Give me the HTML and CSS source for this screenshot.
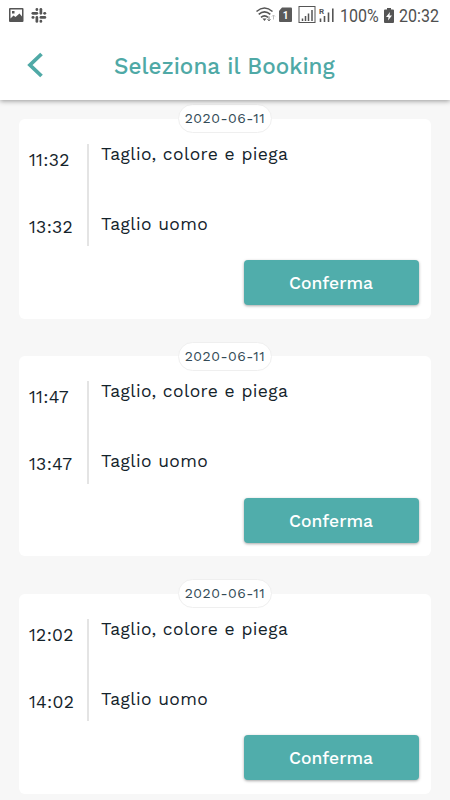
FILE: index.html
```html
<!DOCTYPE html>
<html lang="it">
<head>
<meta charset="utf-8">
<title>Seleziona il Booking</title>
<link rel="stylesheet" href="styles.css">
</head>
<body>
<div class="screen">
  <header class="header">
    <div class="status">
      <svg class="status-left" width="48" height="30" viewBox="0 0 48 30">
        <path fill="#555" fill-rule="evenodd" d="M10 8h12.500q1 0 1 1v12q0 1-1 1H10q-1 0-1-1V9q0-1 1-1zM10.500 9.500v9l3-3 2 1.500 4-3.500 2.500 3V9.500zM12 11h2.500v2.500H12z"/>
        <g transform="translate(31.500 8) scale(.67)" fill="#555">
          <rect y="6" width="10" height="4" rx="2"/><rect x="6" width="4" height="4.500" rx="2"/>
          <rect x="12" width="4" height="10" rx="2"/><rect x="17.500" y="6" width="4.500" height="4" rx="2"/>
          <rect x="12" y="12" width="10" height="4" rx="2"/><rect x="12" y="17.500" width="4" height="4.500" rx="2"/>
          <rect x="6" y="12" width="4" height="10" rx="2"/><rect y="12" width="4.500" height="4" rx="2"/>
        </g>
      </svg>
      <svg class="status-radio" width="82" height="30" viewBox="254 0 82 30">
        <g fill="none" stroke="#555" stroke-width="1.600">
          <path d="M256.500 11.500Q264.500 4.500 272.500 11.500M258.700 14.300Q264.500 9.300 270.300 14.300M261 17.300Q264.500 14.300 268 17.300"/>
        </g>
        <path fill="#555" d="M262.500 18.500h4l-2 2.500z"/>
        <path d="M269 16.500v4.500m-1.500-1.800 1.500 1.800 1.500-1.800" fill="none" stroke="#777"/>
        <path d="M273.500 19.500v-4.500m-1.500 1.500 1.500-1.500 1.500 1.500" fill="none" stroke="#bbb"/>
        <path fill="#5a5a5a" d="M282 7.500h9q1 0 1 1V21q0 1-1 1h-11q-1 0-1-1V11z"/>
        <text x="282.700" y="18.500" class="sim">1</text>
        <rect x="299" y="6.500" width="16" height="16" fill="none" stroke="#555"/>
        <path d="M302.500 18.500v2.500M305.500 16v5M308.500 13.500v7.500M312 10v11" stroke="#555" stroke-width="1.500"/>
        <text x="319" y="14" class="roam">R</text>
        <path d="M320.500 18.500v3.500M324.500 16v6M328.500 12.500v9.500M332.800 8.500v13.500" stroke="#555" stroke-width="1.600"/>
      </svg>
      <span class="battery-text"><span class="narrow">100%</span></span>
      <svg class="battery" width="10" height="15" viewBox="0 0 10 15"><path fill="#555" d="M3 0h4v1.500h2q1 0 1 1V14q0 1-1 1H1q-1 0-1-1V2.500q0-1 1-1h2z"/><path fill="#fff" d="M6 4 2 9h2.500L4 12.500 8 7.500H5.500z"/></svg>
      <span class="clock"><span class="narrow">20:32</span></span>
    </div>
    <div class="appbar">
      <svg class="back" width="17" height="26" viewBox="0 0 17 26"><path d="M14.500 2 3 13l11.500 11" fill="none" stroke="#4fa9a6" stroke-width="3.800"/></svg>
      <h1 class="title">Seleziona il Booking</h1>
    </div>
  </header>
  <main class="list">
    <section class="card">
      <div class="date">2020-06-11</div>
      <div class="body">
        <div class="times"><span>11:32</span><span>13:32</span></div>
        <div class="services"><span>Taglio, colore e piega</span><span>Taglio uomo</span></div>
      </div>
      <button class="confirm">Conferma</button>
    </section>
    <section class="card">
      <div class="date">2020-06-11</div>
      <div class="body">
        <div class="times"><span>11:47</span><span>13:47</span></div>
        <div class="services"><span>Taglio, colore e piega</span><span>Taglio uomo</span></div>
      </div>
      <button class="confirm">Conferma</button>
    </section>
    <section class="card">
      <div class="date">2020-06-11</div>
      <div class="body">
        <div class="times"><span>12:02</span><span>14:02</span></div>
        <div class="services"><span>Taglio, colore e piega</span><span>Taglio uomo</span></div>
      </div>
      <button class="confirm">Conferma</button>
    </section>
  </main>
</div>
</body>
</html>
```

FILE: styles.css
```css
* { box-sizing: border-box; }
body { margin: 0; background: #f7f7f7; font-family: "Work Sans", "Open Sans", sans-serif; color: #14232b; }
.screen { height: 800px; overflow: hidden; display: flex; flex-direction: column; }
.header { position: relative; z-index: 1; height: 100px; flex: none; background: #fff; box-shadow: 0 1px 5px rgba(0,0,0,.4); }
.status { height: 30px; display: flex; align-items: center; font: 18px/30px Roboto, sans-serif; color: #505050; }
.status-radio { margin-left: 206px; }
.battery-text { width: 40px; margin-left: 4px; padding-top: 1px; }
.narrow { display: inline-block; transform: scale(.89, 1.05); transform-origin: left; }
.battery { margin-left: 4px; }
.clock { margin-left: 5px; width: 42px; padding-top: 1px; }
.sim { font: bold 10px Roboto, sans-serif; fill: #fff; }
.roam { font: bold 8px Roboto, sans-serif; fill: #555; }
.appbar { height: 70px; display: flex; align-items: center; }
.back { margin-left: 27px; }
.title { margin: 2px 0 0 70px; font-size: 22.500px; font-weight: 500; line-height: 30px; letter-spacing: .05px; color: #4fa9a6; white-space: nowrap; }
.list { padding: 19px 19px 0; display: flex; flex-direction: column; gap: 37.400px; }
.card { position: relative; flex: none; height: 200px; background: #fff; border-radius: 6px; padding: 25px 12px 0 10px; display: flex; flex-direction: column; }
.date { position: absolute; top: -14.800px; left: 159px; width: 94px; height: 29px; border: 1px solid #efefef; border-radius: 15px; background: #fff; font-size: 14px; line-height: 27px; letter-spacing: .5px; text-align: center; color: #344b57; white-space: nowrap; }
.body { display: flex; height: 102.200px; }
.times { width: 60px; border-right: 2px solid #e4e4e4; font-size: 17.500px; font-weight: 370; line-height: 20px; letter-spacing: .3px; display: flex; flex-direction: column; gap: 47px; padding-top: 6px; }
.services { padding-left: 12px; font-size: 17.500px; font-weight: 370; line-height: 20px; display: flex; flex-direction: column; gap: 50px; letter-spacing: .38px; white-space: nowrap; }
.confirm { align-self: flex-end; margin: 14px 0 0; width: 175px; height: 45px; padding: 0 1px 0 0; border: 0; border-radius: 4px; background: #50adab; box-shadow: 0 1px 3px rgba(0,0,0,.35); color: #fff; font: 500 17.500px/46px "Work Sans", "Open Sans", sans-serif; }
```
